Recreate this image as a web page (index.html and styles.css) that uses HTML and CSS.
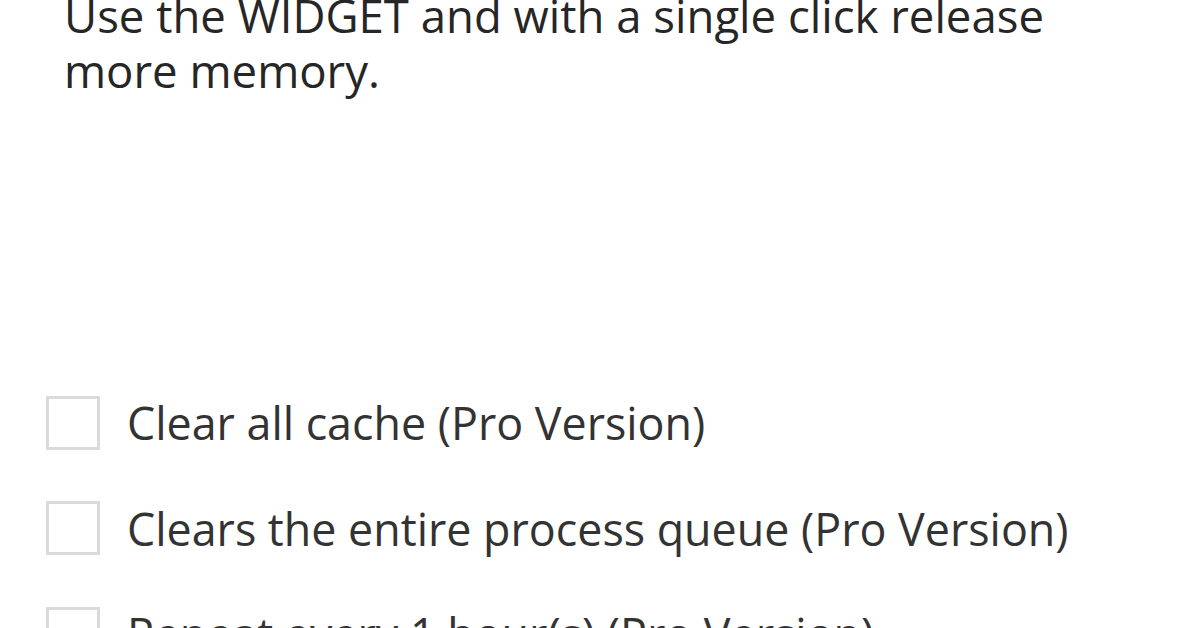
FILE: index.html
```html
<!DOCTYPE html>
<html>
<head>
<meta charset="utf-8">
<link rel="stylesheet" href="styles.css">
</head>
<body>
<main class="screen">
  <p class="desc">Use the WIDGET and with a single click release more memory.</p>
  <ul class="options">
    <li class="option"><span class="box"></span><span class="label">Clear all cache (Pro Version)</span></li>
    <li class="option"><span class="box"></span><span class="label">Clears the entire process queue (Pro Version)</span></li>
    <li class="option"><span class="box"></span><span class="label">Repeat every 1 hour(s) (Pro Version)</span></li>
  </ul>
</main>
</body>
</html>
```
FILE: styles.css
```css
html, body {
  margin: 0;
  padding: 0;
  background: #ffffff;
}
body {
  width: 1196px;
  height: 628px;
  overflow: hidden;
  font-family: "Open Sans", "Noto Sans", sans-serif;
  color: #333333;
}
.screen {
  padding: 0 0 0 64px;
}
.desc {
  margin: -12px 0 0 0;
  width: 1080px;
  font-size: 45.5px;
  line-height: 55px;
  color: #262626;
}
.options {
  list-style: none;
  margin: 0;
  padding: 0;
  margin-top: 298px;
  margin-left: -18px;
  display: flex;
  flex-direction: column;
  gap: 52.5px;
}
.option {
  display: flex;
  align-items: center;
  gap: 27px;
  height: 53px;
}
.box {
  width: 48px;
  height: 48px;
  border: 3px solid #dadada;
  flex: none;
}
.label {
  font-size: 44.8px;
  line-height: 53px;
  color: #333333;
  white-space: nowrap;
}
```
